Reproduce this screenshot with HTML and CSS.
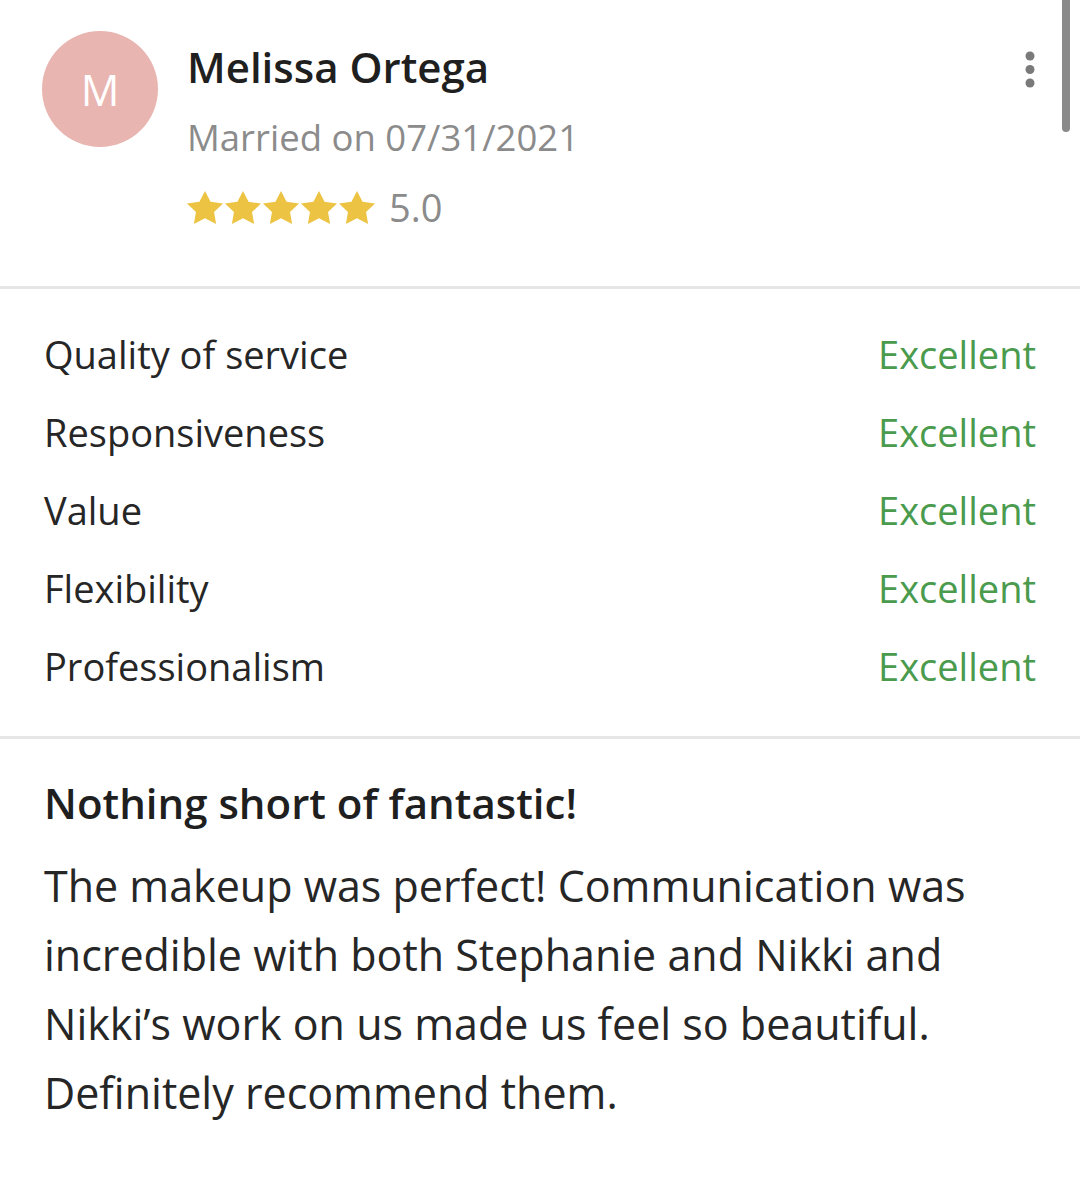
FILE: index.html
```html
<!DOCTYPE html>
<html>
<head>
<meta charset="utf-8">
<link rel="stylesheet" href="styles.css">
</head>
<body>
<div class="scrollbar"></div>
<div class="review">
  <div class="header">
    <div class="avatar">M</div>
    <div class="info">
      <div class="name">Melissa Ortega</div>
      <div class="married">Married on 07/31/2021</div>
      <div class="rating">
        <div class="stars">
          <svg viewBox="0 0 19.02 18.09" preserveAspectRatio="none" class="star"><path d="M9.51 0L12.45 5.95 19.02 6.91 14.27 11.55 15.39 18.09 9.51 15 3.63 18.09 4.75 11.55 0 6.91 6.57 5.95z"/></svg>
          <svg viewBox="0 0 19.02 18.09" preserveAspectRatio="none" class="star"><path d="M9.51 0L12.45 5.95 19.02 6.91 14.27 11.55 15.39 18.09 9.51 15 3.63 18.09 4.75 11.55 0 6.91 6.57 5.95z"/></svg>
          <svg viewBox="0 0 19.02 18.09" preserveAspectRatio="none" class="star"><path d="M9.51 0L12.45 5.95 19.02 6.91 14.27 11.55 15.39 18.09 9.51 15 3.63 18.09 4.75 11.55 0 6.91 6.57 5.95z"/></svg>
          <svg viewBox="0 0 19.02 18.09" preserveAspectRatio="none" class="star"><path d="M9.51 0L12.45 5.95 19.02 6.91 14.27 11.55 15.39 18.09 9.51 15 3.63 18.09 4.75 11.55 0 6.91 6.57 5.95z"/></svg>
          <svg viewBox="0 0 19.02 18.09" preserveAspectRatio="none" class="star"><path d="M9.51 0L12.45 5.95 19.02 6.91 14.27 11.55 15.39 18.09 9.51 15 3.63 18.09 4.75 11.55 0 6.91 6.57 5.95z"/></svg>
        </div>
        <span class="score">5.0</span>
      </div>
    </div>
    <svg class="menu" viewBox="0 0 12 40"><circle cx="6" cy="6" r="4.5"/><circle cx="6" cy="19.5" r="4.5"/><circle cx="6" cy="33" r="4.5"/></svg>
  </div>
  <div class="divider"></div>
  <div class="scores">
    <div class="row"><span class="label">Quality of service</span><span class="value">Excellent</span></div>
    <div class="row"><span class="label">Responsiveness</span><span class="value">Excellent</span></div>
    <div class="row"><span class="label">Value</span><span class="value">Excellent</span></div>
    <div class="row"><span class="label">Flexibility</span><span class="value">Excellent</span></div>
    <div class="row"><span class="label">Professionalism</span><span class="value">Excellent</span></div>
  </div>
  <div class="divider"></div>
  <div class="content">
    <h2 class="title">Nothing short of fantastic!</h2>
    <p class="body">The makeup was perfect! Communication was incredible with both Stephanie and Nikki and Nikki’s work on us made us feel so beautiful. Definitely recommend them.</p>
  </div>
</div>
</body>
</html>
```

FILE: styles.css
```css
html, body {
  margin: 0;
  padding: 0;
  background: #ffffff;
}
body {
  font-family: "Open Sans", "Lato", sans-serif;
  color: #262626;
  width: 1080px;
  height: 1184px;
  overflow: hidden;
  position: relative;
}
.scrollbar {
  position: absolute;
  top: -6px;
  left: 1062px;
  width: 8px;
  height: 138px;
  border-radius: 4px;
  background: #8a8a8a;
}
.header {
  display: flex;
  align-items: flex-start;
  padding: 31px 0 0 42px;
  height: 255px;
}
.avatar {
  width: 116px;
  height: 116px;
  border-radius: 50%;
  background: #e9b5b1;
  color: #ffffff;
  font-size: 43px;
  font-weight: 400;
  line-height: 1;
  display: flex;
  align-items: center;
  justify-content: center;
  flex-shrink: 0;
}
.info {
  margin-left: 29px;
  display: flex;
  flex-direction: column;
}
.name {
  font-size: 42px;
  font-weight: 600;
  line-height: 48px;
  margin-top: 12px;
  color: #1f1f1f;
}
.married {
  font-size: 36.5px;
  line-height: 48px;
  margin-top: 22px;
  color: #8b8b8b;
}
.rating {
  display: flex;
  align-items: center;
  margin-top: 26px;
  height: 40px;
}
.stars {
  display: flex;
  gap: 2px;
}
.star {
  width: 36px;
  height: 33px;
  fill: #ecc342;
}
.score {
  font-size: 38px;
  line-height: 40px;
  color: #8b8b8b;
  margin-left: 14px;
}
.menu {
  width: 12px;
  height: 40px;
  fill: #7a7a7a;
  margin-left: auto;
  margin-right: 44px;
  margin-top: 19px;
}
.divider {
  height: 3px;
  background: #e6e6e6;
}
.scores {
  padding: 26px 44px 31px 44px;
}
.row {
  display: flex;
  justify-content: space-between;
  align-items: center;
  height: 78px;
  font-size: 38px;
}
.label {
  color: #262626;
}
.value {
  color: #4a9b4d;
}
.content {
  padding: 0 44px;
}
.title {
  margin: 39px 0 0 0;
  font-size: 42px;
  line-height: 50px;
  font-weight: 600;
  color: #1f1f1f;
}
.body {
  margin: 23px 0 0 0;
  font-size: 43px;
  line-height: 69px;
  color: #262626;
}
```
